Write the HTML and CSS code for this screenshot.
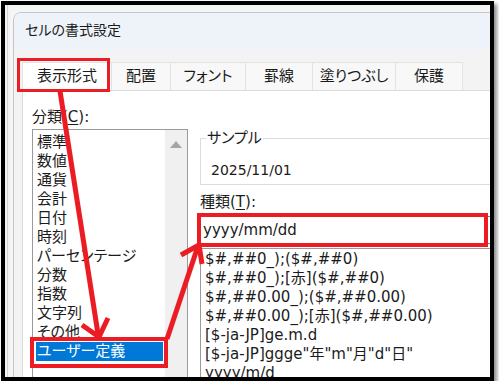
FILE: index.html
```html
<!DOCTYPE html>
<html lang="ja">
<head>
<meta charset="utf-8">
<title>セルの書式設定</title>
<link rel="stylesheet" href="styles.css">
</head>
<body>
<div class="frame">
  <div class="sheet">
    <div class="dialog">
      <div class="titlebar">セルの書式設定</div>
      <div class="dlg-body">
        <div class="tabs">
          <div class="tab tab-active w1">表示形式</div>
          <div class="tab w2">配置</div>
          <div class="tab w3">フォント</div>
          <div class="tab w4">罫線</div>
          <div class="tab w5">塗りつぶし</div>
          <div class="tab w6">保護</div>
        </div>
        <div class="panel">
          <div class="label">分類(<u>C</u>):</div>
          <div class="row">
            <div class="listbox">
              <ul class="cat-list">
                <li>標準</li>
                <li>数値</li>
                <li>通貨</li>
                <li>会計</li>
                <li>日付</li>
                <li>時刻</li>
                <li>パーセンテージ</li>
                <li>分数</li>
                <li>指数</li>
                <li>文字列</li>
                <li>その他</li>
                <li class="selected">ユーザー定義</li>
              </ul>
              <div class="scrollbar"><span class="arrow-up"></span></div>
            </div>
            <div class="right">
              <fieldset class="sample">
                <legend>サンプル</legend>
                <div class="sample-value">2025/11/01</div>
              </fieldset>
              <div class="label label-type">種類(<u>T</u>):</div>
              <div class="type-input">yyyy/mm/dd</div>
              <ul class="fmt-list">
                <li>$#,##0_);($#,##0)</li>
                <li>$#,##0_);[赤]($#,##0)</li>
                <li>$#,##0.00_);($#,##0.00)</li>
                <li>$#,##0.00_);[赤]($#,##0.00)</li>
                <li>[$-ja-JP]ge.m.d</li>
                <li>[$-ja-JP]ggge"年"m"月"d"日"</li>
                <li>yyyy/m/d</li>
              </ul>
            </div>
          </div>
        </div>
      </div>
    </div>
  </div>
  <svg class="arrows" viewBox="5 5 485 372" width="485" height="372" aria-hidden="true">
    <g fill="none" stroke="#ec1c24" stroke-width="5" stroke-linejoin="miter">
      <line x1="60" y1="91" x2="98" y2="334"/>
      <polyline points="82,325 99,337 108,318"/>
      <line x1="167" y1="339" x2="197" y2="249"/>
      <polyline points="181,255 199,245 202,264"/>
    </g>
  </svg>
</div>
</body>
</html>
```
FILE: styles.css
```css
html, body {
  margin: 0;
  background: #fff;
}

body {
  font-family: "DejaVu Sans", "Noto Sans CJK JP", sans-serif;
  font-feature-settings: "palt";
  color: #1b1b1b;
}

.frame {
  position: relative;
  box-sizing: border-box;
  width: 493px;
  height: 380px;
  margin: 1px 0 0 1px;
  border: 4px solid #000;
  overflow: hidden;
  box-shadow: 3px 3px 4px rgba(0, 0, 0, 0.45);
}

.sheet {
  box-sizing: border-box;
  height: 100%;
  padding: 7px 0 0 8px;
  background:
    linear-gradient(to right, transparent 2px, #d6d6d6 2px, #d6d6d6 3px, transparent 3px),
    #f5f5f5;
}

.dialog {
  width: 560px;
  border: 1px solid #c6c6c6;
  border-radius: 8px 0 0 0;
  background: #f3f3f3;
}

.titlebar {
  box-sizing: border-box;
  height: 37px;
  padding: 0 0 3px 11px;
  line-height: 34px;
  font-size: 14px;
  background: #eef3fa;
  border-radius: 7px 0 0 0;
}

.dlg-body {
  padding: 12px 0 0 8px;
}

.tabs {
  display: flex;
  height: 28px;
}

.tab {
  box-sizing: border-box;
  height: 28px;
  margin-right: -1px;
  border: 1px solid #e3e3e3;
  border-bottom: 0;
  background: #f8f8f8;
  font-size: 15px;
  line-height: 27px;
  text-align: center;
}

.w1 { width: 90px; }
.w2 { width: 60px; }
.w3 { width: 76px; }
.w4 { width: 68px; }
.w5 { width: 84px; }
.w6 { width: 68px; }

.tab-active {
  position: relative;
  background: #fff;
}

.tab-active::after {
  content: "";
  position: absolute;
  left: -6px;
  top: -5px;
  width: 93px;
  height: 34px;
  box-sizing: border-box;
  border: 3px solid #ec1c24;
}

.panel {
  height: 400px;
  padding: 17px 0 0 9px;
  border: 1px solid #dcdcdc;
  background: #fff;
}

.label {
  font-size: 15px;
  line-height: 19px;
}

.label u {
  text-decoration-thickness: 1px;
  text-underline-offset: 2px;
}

.row {
  display: flex;
  gap: 12px;
  margin-top: 2px;
}

.listbox {
  display: flex;
  box-sizing: border-box;
  width: 156px;
  height: 270px;
  border: 1px solid #9a9a9a;
  background: #fff;
}

.cat-list {
  flex: 1;
  margin: 0;
  padding: 3px 2px 0 3px;
  list-style: none;
}

.cat-list li {
  padding-left: 1px;
  font-size: 15px;
  line-height: 19px;
  white-space: nowrap;
}

.cat-list .selected {
  position: relative;
  background: #0078d7;
  color: #fff;
}

.cat-list .selected::after {
  content: "";
  position: absolute;
  left: -6px;
  top: -5px;
  width: 138px;
  height: 31px;
  box-sizing: border-box;
  border: 4px solid #ec1c24;
}

.scrollbar {
  display: flex;
  justify-content: center;
  width: 22px;
  padding-top: 11px;
  box-sizing: border-box;
  background: #f0f0f0;
}

.arrow-up {
  width: 0;
  height: 0;
  border-left: 6px solid transparent;
  border-right: 6px solid transparent;
  border-bottom: 7px solid #a6a6a6;
}

.right {
  flex: 1;
  display: flex;
  flex-direction: column;
}

.sample {
  min-width: 0;
  margin: 0;
  padding: 0 0 4px 10px;
  border: 1px solid #dcdcdc;
}

.sample legend {
  margin-left: -5px;
  padding: 0 1px;
  font-size: 15px;
  line-height: 19px;
}

.sample-value {
  margin-top: 13px;
  font-size: 14px;
  line-height: 19px;
}

.label-type {
  margin-top: 8px;
}

.type-input {
  position: relative;
  box-sizing: border-box;
  height: 28px;
  margin-top: 4px;
  padding: 0 2px;
  border: 1px solid #7a7a7a;
  font-size: 15px;
  line-height: 26px;
  background: #fff;
}

.type-input::after {
  content: "";
  position: absolute;
  left: -4px;
  top: -4px;
  width: 291px;
  height: 34px;
  box-sizing: border-box;
  border: 4px solid #ec1c24;
}

.fmt-list {
  margin: 4px 0 0;
  padding: 1px 0 0 4px;
  height: 200px;
  border: 1px solid #9a9a9a;
  list-style: none;
}

.fmt-list li {
  font-size: 15px;
  line-height: 19px;
  white-space: nowrap;
}

.arrows {
  position: absolute;
  left: 0;
  top: 0;
}
```
